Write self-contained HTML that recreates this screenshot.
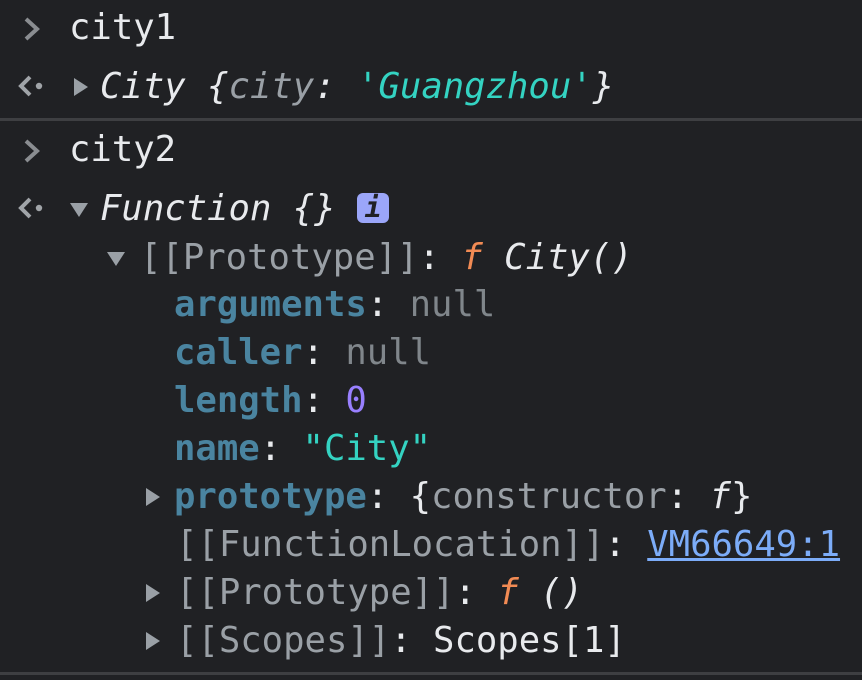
<html><head><style>
body{margin:0;width:862px;height:680px;background:#202124;overflow:hidden;font-family:"DejaVu Sans Mono","Liberation Mono",monospace;font-size:35.6px;color:#e8eaed;position:relative}
.l{position:absolute;white-space:pre;line-height:48px;height:48px}
.g{color:#9aa0a6}.k{color:#4a84a0;font-weight:bold}.n{color:#80868b}.s{color:#34d3c2}.p{color:#9980ff}.o{color:#f28b54;font-style:italic}.i{font-style:italic}
.lk{color:#7cacf8;text-decoration:underline}
.sep{position:absolute;left:0;width:862px;height:3px;background:#3e3f42}
.tr{position:absolute;width:0;height:0}
.r{border-top:9px solid transparent;border-bottom:9px solid transparent;border-left:14px solid #9aa0a6}
.d{border-left:9px solid transparent;border-right:9px solid transparent;border-top:14px solid #9aa0a6}
svg{position:absolute}
</style></head><body>
<svg style="left:21px;top:16px" width="22" height="26"><path d="M5 3 L16 13 L5 23" stroke="#8a8d91" stroke-width="4" fill="none"/></svg>
<div class="l" style="left:69px;top:4px">city1</div>
<svg style="left:17px;top:74px" width="30" height="26"><path d="M13 3 L4 12 L13 21" stroke="#a0a4a8" stroke-width="4" fill="none"/><circle cx="22" cy="12" r="3.2" fill="#a0a4a8"/></svg>
<div class="tr r" style="left:74px;top:78px"></div>
<div class="l i" style="left:100px;top:63px">City {<span class="g">city</span>: <span class="s">'Guangzhou'</span>}</div>
<div class="sep" style="top:118px"></div>
<svg style="left:21px;top:138px" width="22" height="26"><path d="M5 3 L16 13 L5 23" stroke="#8a8d91" stroke-width="4" fill="none"/></svg>
<div class="l" style="left:69px;top:126px">city2</div>
<svg style="left:17px;top:196px" width="30" height="26"><path d="M13 3 L4 12 L13 21" stroke="#a0a4a8" stroke-width="4" fill="none"/><circle cx="22" cy="12" r="3.2" fill="#a0a4a8"/></svg>
<div class="tr d" style="left:70px;top:203px"></div>
<div class="l i" style="left:100px;top:185px">Function {}</div>
<div style="position:absolute;left:357px;top:193px;width:32px;height:30px;background:#9ba6f9;border-radius:6px;color:#202124;font:italic bold 28px 'DejaVu Sans Mono',monospace;text-align:center;line-height:30px">i</div>
<div class="tr d" style="left:107px;top:252px"></div>
<div class="l" style="left:140px;top:234px"><span class="g">[[Prototype]]</span>: <span class="o">f</span> <span class="i">City()</span></div>
<div class="l" style="left:174px;top:281px"><span class="k">arguments</span>: <span class="n">null</span></div>
<div class="l" style="left:174px;top:329px"><span class="k">caller</span>: <span class="n">null</span></div>
<div class="l" style="left:174px;top:377px"><span class="k">length</span>: <span class="p">0</span></div>
<div class="l" style="left:174px;top:425px"><span class="k">name</span>: <span class="s">"City"</span></div>
<div class="tr r" style="left:146px;top:488px"></div>
<div class="l" style="left:174px;top:473px"><span class="k">prototype</span>: {<span class="g">constructor</span>: <span class="i">f</span>}</div>
<div class="l" style="left:176px;top:521px"><span class="g">[[FunctionLocation]]</span>: <span class="lk">VM66649:1</span></div>
<div class="tr r" style="left:146px;top:584px"></div>
<div class="l" style="left:176px;top:569px"><span class="g">[[Prototype]]</span>: <span class="o">f</span> <span class="i">()</span></div>
<div class="tr r" style="left:146px;top:632px"></div>
<div class="l" style="left:176px;top:617px"><span class="g">[[Scopes]]</span>: Scopes[1]</div>
<div class="sep" style="top:672px"></div>
</body></html>
